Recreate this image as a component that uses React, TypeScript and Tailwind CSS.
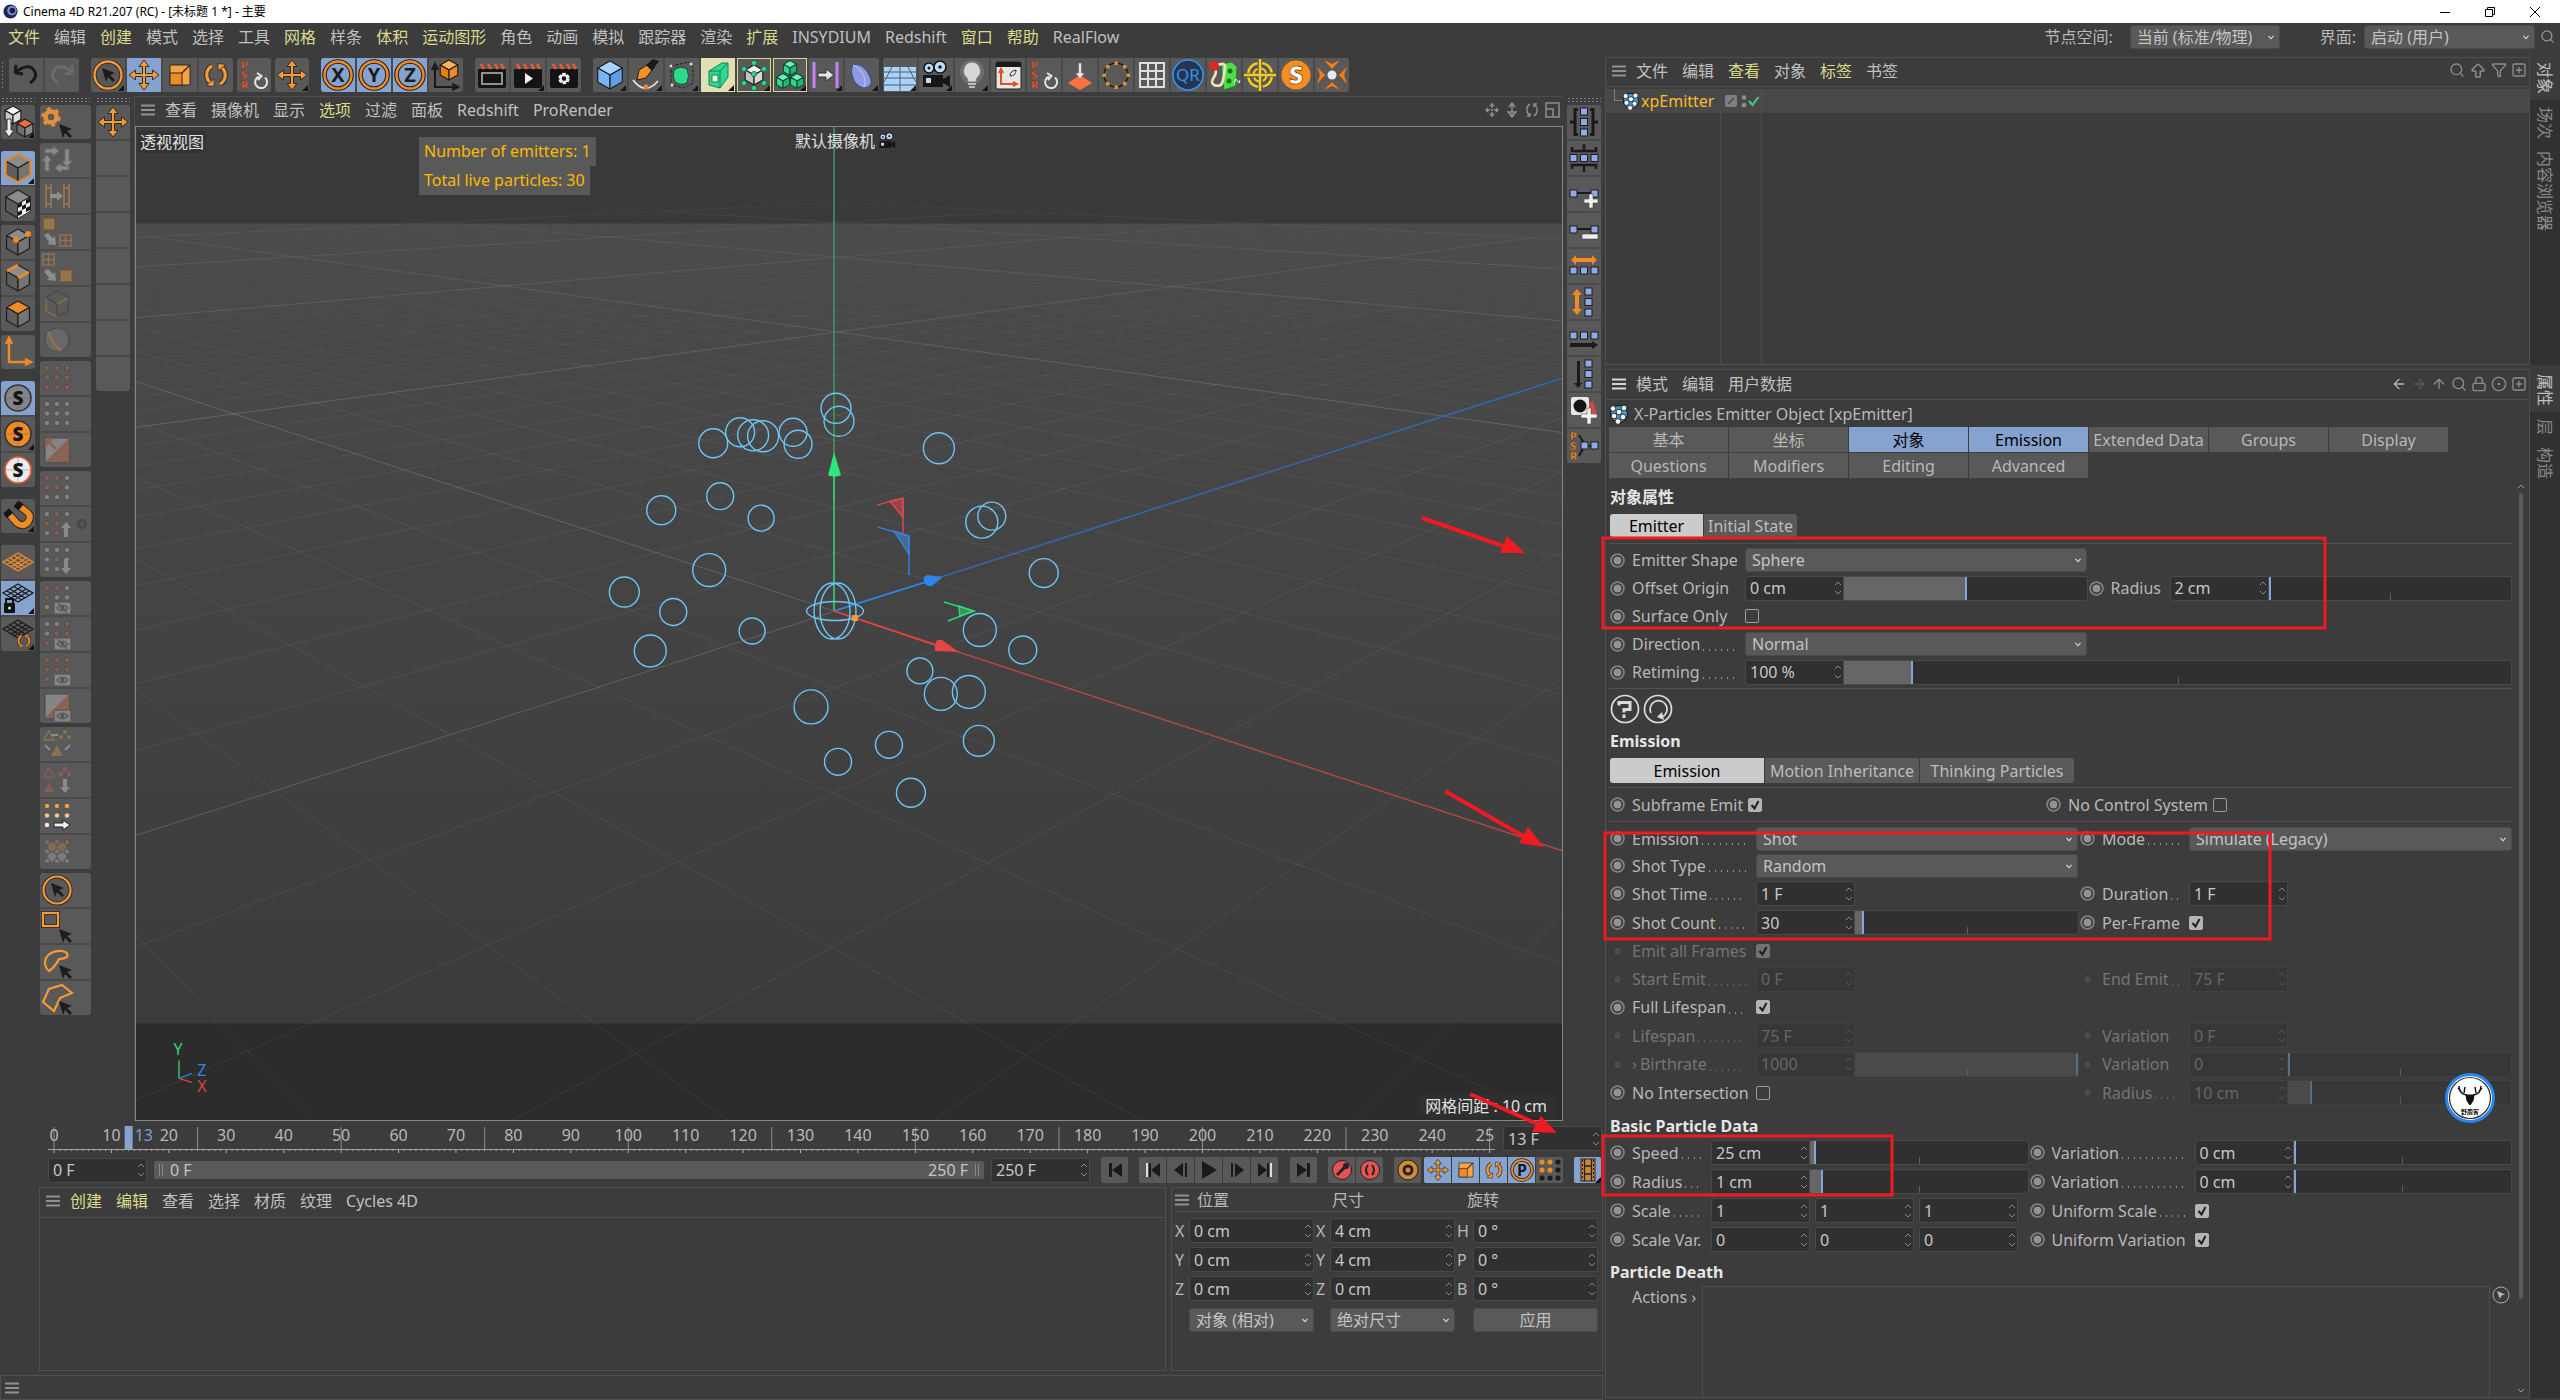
import React, { useId, type ReactNode } from "react";
import {
  ArrowBigUp, ArrowLeft, ArrowRight, ArrowUp, CircleDot, Filter, Lock, Search, SquarePlus,
} from "lucide-react";

const OR = "#f08a24";
const BL = "#8fa9ec";
const GR = "#2fd98b";

/* ---------- icon drawing helpers ---------- */

function Cube({ x = 17, y = 17, s = 11, top = "#8c8c8c", left = "#5e5e5e", right = "#757575", line = "#1e1e1e" }: {
  x?: number; y?: number; s?: number; top?: string; left?: string; right?: string; line?: string;
}) {
  const w = s * 0.88;
  const h = s * 0.5;
  return (
    <g stroke={line} strokeWidth="1.2" strokeLinejoin="round">
      <path fill={top} d={`M${x} ${y - s}L${x + w} ${y - h}L${x} ${y}L${x - w} ${y - h}Z`} />
      <path fill={left} d={`M${x - w} ${y - h}L${x} ${y}V${y + s}L${x - w} ${y + h}Z`} />
      <path fill={right} d={`M${x + w} ${y - h}L${x} ${y}V${y + s}L${x + w} ${y + h}Z`} />
    </g>
  );
}

const corner = <path d="M33 27v6h-6z" fill="#151515" />;
const cursor = (x: number, y: number, c = "#1c1c1c") => (
  <path transform={`translate(${x} ${y})`} fill={c} d="M0 0l13 5-5 2 5 5-2 2-5-5-2 5z" />
);
const dots = (colors: string[], skip: number[] = []) =>
  colors.map((c, i) =>
    skip.includes(i) ? null : (
      <circle key={i} cx={7 + (i % 3) * 10} cy={7 + Math.floor(i / 3) * 9.5} r="2.7" fill={c} stroke="#4a4a4a" strokeWidth=".8" />
    ));
const R = "#865d54";
const W = "#828282";
const eye = (slash: boolean) => (
  <g stroke="#565656" strokeWidth="1.2">
    <rect x="14" y="21" width="17" height="12" fill="#868686" />
    <path d="M17 27q5.500-6 11 0q-5.500 6-11 0z" fill="none" />
    <circle cx="22.500" cy="27" r="1.600" fill="#565656" />
    {slash && <path d="M18 22.500l9 9" />}
  </g>
);
const sq = (x: number, y: number) => <rect key={`${x}-${y}`} x={x} y={y} width="7" height="7" fill={BL} stroke="#1c1c1c" />;
const moveCross = (c: string) => (
  <path fill={c} stroke="#2b2b2b" strokeWidth="1" strokeLinejoin="round" d="M17 2l5 6.500h-3.500v7h7V12l6.500 5-6.500 5v-3.500h-7v7H22L17 32l-5-6.500h3.500v-7h-7V22L2 17l6.500-5v3.500h7v-7H12z" />
);
const axis = (l: string) => (
  <>
    <circle cx="17" cy="17" r="13.500" fill="none" stroke="#222" strokeWidth="4.600" />
    <circle cx="17" cy="17" r="13.500" fill="none" stroke={OR} strokeWidth="2.400" />
    <text x="17" y="24" textAnchor="middle" fontSize="20" fontWeight="700" fill="#1c1c1c">{l}</text>
  </>
);
const psr = (x: number, c: string) => (
  <g fontSize="11" fontWeight="800" fill={c} stroke="#2a2a2a" strokeWidth=".3">
    <text x={x} y="11">P</text><text x={x} y="21">S</text><text x={x} y="31">R</text>
  </g>
);
const rotArrows = (c: string) => (
  <>
    <g fill="none" stroke="#2b2b2b" strokeWidth="5.200">
      <path d="M13 8a10 10 0 0 0-1 17" /><path d="M21 26a10 10 0 0 0 1-17" />
    </g>
    <g fill="none" stroke={c} strokeWidth="3.200">
      <path d="M13 8a10 10 0 0 0-1 17" /><path d="M21 26a10 10 0 0 0 1-17" />
    </g>
    <path d="M15 21v7.500l-8-1zM19 13V5.500l8 1z" fill={c} stroke="#2b2b2b" strokeWidth=".8" />
  </>
);
const scaleBox = (
  <g stroke="#2b2b2b" strokeWidth="1">
    <path fill="#f8a244" d="M7 7h20v20H7z" /><path fill={OR} d="M7 15h12v12H7z" /><path d="M19 15l8-8" strokeWidth="1.500" />
  </g>
);
const clap = (
  <>
    <path fill="#141414" d="M3 11h28v17a2 2 0 0 1-2 2H5a2 2 0 0 1-2-2z" />
    <path stroke="#ee5a32" strokeWidth="2.600" d="M6 6l3 5M13 6l3 5M20 6l3 5M26 6l3 5" />
  </>
);
const sBall = (bg: string, ring: string) => (
  <>
    <circle cx="17" cy="17" r="13" fill={bg} stroke={ring} strokeWidth="1.600" />
    <path d="M4 17h26M17 4v26" stroke="#55555577" strokeWidth=".8" />
    <text x="17" y="24" textAnchor="middle" fontSize="19" fontWeight="900" fill="#161616">S</text>
  </>
);
const plane = (c: string) => (
  <g fill="none" stroke={c} strokeWidth="1.300">
    <path d="M17 3L32 12 17 21 2 12zM13 5.500l15 9M9 8l15 9M6 10l15 9M21 5.500L6 14.500M25 8L10 17M28 10L13 19" />
  </g>
);
const camera = (
  <>
    <circle cx="10" cy="10" r="5" fill="#bcdcfa" stroke="#161616" strokeWidth="1.600" /><circle cx="21" cy="9" r="6" fill="#bcdcfa" stroke="#161616" strokeWidth="1.600" />
    <circle cx="10" cy="10" r="1.500" fill="#161616" /><circle cx="21" cy="9" r="1.800" fill="#161616" />
    <path fill="#161616" d="M4 17h20v4l7-4v12l-7-4v4H4z" /><rect x="7" y="20" width="5" height="5" fill="#bcdcfa" />
  </>
);

const I: Record<string, ReactNode> = {
  undo: <path d="M6 15q10-9 17-5q8 8-2 15M6 15l1-8M6 15l8 1" fill="none" stroke="#1a1a1a" strokeWidth="3" />,
  redo: <path d="M28 15q-10-9-17-5q-8 8 2 15M28 15l-1-8M28 15l-8 1" fill="none" stroke="#6a6a6a" strokeWidth="3" />,
  live: <><circle cx="17" cy="17" r="13.500" fill="none" stroke="#222" strokeWidth="4" /><circle cx="17" cy="17" r="13.500" fill="none" stroke="#f79a34" strokeWidth="2.400" />{cursor(11, 10)}{corner}</>,
  move: moveCross("#f79a34"),
  moveC: <>{moveCross("#f79a34")}{corner}</>,
  scale: scaleBox,
  rotate: rotArrows("#f79a34"),
  psr: <>{psr(4, "#ee5a32")}<path d="M28 19.500a6 6 0 1 1-6-1M20 15l4.500 3-3.500 4" fill="none" stroke="#e4e4e4" strokeWidth="2" /></>,
  x: axis("X"), y: axis("Y"), z: axis("Z"),
  coord: <><path d="M6 8v21h21M3 12l3-6 3 6M23 26l6 3-6 3" fill="none" stroke="#1a1a1a" strokeWidth="2.200" /><Cube x={20} y={12} s={10} top="#fbb25c" left="#e57f16" right={OR} /></>,
  clap1: <>{clap}<rect x="7" y="15" width="20" height="11" fill="none" stroke="#b9b9b9" strokeWidth="1.500" /></>,
  clap2: <>{clap}<path d="M14 15l8 5.500-8 5.500z" fill="#eee" />{corner}</>,
  clap3: <>{clap}<circle cx="17" cy="20.500" r="4" fill="none" stroke="#eee" strokeWidth="3.500" strokeDasharray="3 1.200" /><circle cx="17" cy="20.500" r="3.500" fill="none" stroke="#eee" strokeWidth="2" /></>,
  cube: <><Cube s={14} top="#a9d4ff" left="#77b5f3" right="#5b9ee4" />{corner}</>,
  pen: <><path d="M4 22q12 16 25 1" fill="none" stroke="#e6e6e6" strokeWidth="1.800" /><path d="M8 22l2-10 8-5 5 5-6 8z" fill="#f3902c" stroke="#1c1c1c" /><path d="M17 7l7-6 6 2-7 10z" fill="#191919" /><circle cx="17" cy="29" r="2.500" fill={OR} />{corner}</>,
  subd: <><path d="M6 8l18-4 4 6v15l-9 5-13-3z" fill="none" stroke="#1f1f1f" strokeDasharray="3 1.500" /><path d="M9 12q6-5 13-1q3 6 0 14q-7 3-12-1q-3-6-1-12z" fill={GR} stroke="#114b33" /><circle cx="6" cy="8" r="1.500" fill="#ddd" /><circle cx="26" cy="6" r="1.500" fill="#ddd" /><circle cx="7" cy="27" r="1.500" fill="#ddd" />{corner}</>,
  extrude: <><path d="M8 13l13-8h6v14l-8 11-11-3z" fill={GR} stroke="#148052" /><path d="M8 13h11v17M19 13l8-8" fill="none" stroke="#148052" /><rect x="11" y="17" width="6" height="7" fill="#f2f2d8" stroke="#148052" />{corner}</>,
  array: <><Cube s={10} top="#f0f0f0" left="#c4c4c4" right="#d8d8d8" />{[[17, 5], [17, 30], [7, 11], [27, 11], [7, 25], [27, 25], [17, 16]].map(([a, c]) => <circle key={`${a}${c}`} cx={a} cy={c} r="2.600" fill={GR} stroke="#11623f" strokeWidth=".8" />)}{corner}</>,
  cubes: <>{[[17, 10], [10, 23], [24, 23]].map(([a, c]) => <Cube key={`${a}`} x={a} y={c} s={7.5} top="#6cf0b5" left={GR} right="#22b874" line="#134f36" />)}{corner}</>,
  field: <><path d="M5 4v26M28 4v26" stroke="#c382f5" strokeWidth="3" /><path d="M9 15h8v-4l8 6-8 6v-4H9z" fill="#e4e4e4" stroke="#333" />{corner}</>,
  bend: <><path d="M8 7q7-2 13 5q6 8 5 14q-4 5-8 4q-8-3-10-10q-3-8 0-13z" fill="#8f9be0" stroke="#3e4684" /><path d="M8 7q8 4 11 11q2 6 0 11" fill="none" stroke="#c0c8fa" />{corner}</>,
  floor: <><rect x="1" y="9" width="32" height="24" fill="#a9d2fc" /><path d="M1 14h32M1 20h32M1 27h32M17 9v24M9 9L1 24M25 9l8 15" stroke="#4e5d6c" fill="none" />{corner}</>,
  camera: <>{camera}{corner}</>,
  bulb: <><circle cx="17" cy="14" r="12" fill="#ffffff22" /><path d="M17 4a9 9 0 0 1 5 16l-1 4h-8l-1-4a9 9 0 0 1 5-16z" fill="#d8d8d8" stroke="#777" /><path d="M13 26h8M14 29h6" stroke="#bbb" strokeWidth="2" />{corner}</>,
  uv: <><rect x="5" y="4" width="25" height="27" rx="2" fill="#e8e6e4" stroke="#222" /><path d="M5 4h25v5H5z" fill="#1a1a1a" /><path d="M10 13v13h14M8 15l2-4 2 4M22 24l4 2-4 2" fill="none" stroke="#dd5122" strokeWidth="2" /><path d="M19 18q0-5 6-6q0 6-6 6z" fill="none" stroke="#333" /></>,
  drop: <><path d="M17 17l12 8-12 7-12-7z" fill="#fd7141" /><path d="M15.500 5h3v10h3L17 21l-4.500-6h3z" fill="#e6e6e6" stroke="#555" strokeWidth=".5" /></>,
  ring: <><circle cx="17" cy="17" r="12" fill="none" stroke="#1a1a1a" strokeWidth="1.500" />{[0, 1, 2, 3, 4, 5, 6, 7].map((k) => <rect key={k} x={15.5 + 12 * Math.cos(k * 0.785)} y={15.5 + 12 * Math.sin(k * 0.785)} width="3.500" height="3.500" fill="#e09030" />)}</>,
  grid: <path d="M5 5h24v24H5zM5 13h24M5 21h24M13 5v24M21 5v24" fill="none" stroke="#dedede" strokeWidth="2" />,
  qr: <><circle cx="17" cy="17" r="15" fill="#283350" stroke="#2f93ee" strokeWidth="1.600" /><text x="17" y="23" textAnchor="middle" fontSize="17" fill="#2f93ee">QR</text></>,
  snake: <><path d="M14 6l11-2 5 5-1 19-12 4z" fill="#4fdc48" stroke="#1d7d20" /><circle cx="23" cy="13" r="2.500" fill="#177a1a" /><circle cx="22" cy="23" r="2.500" fill="#177a1a" /><path d="M9 8q10-5 9 2t-2 12q-1 8-9 5q-4-2 0-8q3-4 1-8" fill="none" stroke="#f0dfc0" strokeWidth="2.600" /><circle cx="7" cy="8" r="5" fill="#d72a2a" /><path d="M27 25l2-4 3 4 1-3" fill="none" stroke="#eee" /></>,
  target: <g fill="none" stroke="#f8cb1c"><circle cx="17" cy="17" r="12" strokeWidth="2.400" strokeDasharray="14 4.800" strokeDashoffset="-2" /><circle cx="17" cy="17" r="6.500" strokeWidth="2" strokeDasharray="7 3.200" /><path d="M17 1v32M1 17h32" strokeWidth="2.400" /></g>,
  sOrange: <><circle cx="17" cy="17" r="14.500" fill="#f98c1d" /><text x="17" y="26" textAnchor="middle" fontSize="25" fontWeight="900" fill="#fff" stroke="#5b3410" strokeWidth=".6">S</text></>,
  burst: <><path fill="#fb7a12" d="M9 2l8 4 8-4-8 9zM9 32l8-8 8 8-8-4zM2 9l8 8-8 9 3-9zM32 9l-8 8 8 9-3-9z" /><circle cx="17" cy="17" r="4.500" fill="#e8e8ee" /></>,

  editable: <><Cube x={12} y={10} s={9} top="#f4f4f4" left="#c9c9c9" right="#dedede" /><Cube x={24} y={23} s={9} top="#f26a34" left="#707070" right="#8a8a8a" /><path d="M6 14h4v11h3l-5 7-5-7h3z" fill="#eee" stroke="#333" />{corner}</>,
  model: <><Cube s={14} top="#8b8b8b" left="#5d5d5d" right="#747474" /><path d="M17 3L29.300 10v14L17 31 4.700 24V10z" fill="none" stroke={OR} strokeWidth="2" />{corner}</>,
  texture: <><Cube s={14} /><path d="M17 17l12-6v13l-12 7z" fill="#eee" /><path d="M17 17l4-2v4l-4 2zM25 13l4-2v4l-4 2zM21 19l4-2v4l-4 2zM17 25l4-2v4l-4 2zM25 21l4-2v4l-4 2z" fill="#161616" /></>,
  point: <><Cube s={13} /><circle cx="15" cy="15" r="3" fill={OR} /><circle cx="27" cy="9" r="3" fill={OR} /></>,
  edge: <><Cube s={13} /><path d="M6 10l11-6M17 17l11-6" stroke={OR} strokeWidth="2.600" /></>,
  poly: <Cube s={13} top={OR} />,
  axisL: <path d="M8 6v21h19M5 9l3-6 3 6M24 24l6 3-6 3" fill="none" stroke={OR} strokeWidth="2.400" />,
  s1: sBall("#858585", "#333"), s2: <>{sBall(OR, "#333")}{corner}</>, s3: sBall("#ececec", "#ee5a32"),
  magnet: <><path d="M7 14l9 10q6 5 11-1q4-6-1-10l-9-7" fill="none" stroke="#2a2a2a" strokeWidth="8" /><path d="M7 14l9 10q6 5 11-1q4-6-1-10l-9-7" fill="none" stroke={OR} strokeWidth="6" /><path d="M5 12l4 4.500M15 4.500l5 4" stroke="#161616" strokeWidth="7.500" />{corner}</>,
  wp: <g transform="translate(0 5)">{plane(OR)}</g>,
  wplock: <>{plane("#1b1b1b")}<rect x="3" y="22" width="11" height="10" rx="1" fill="#111" /><path d="M5 22v-4h7v4" fill="none" stroke="#111" strokeWidth="2" /><circle cx="8.500" cy="27" r="1.500" fill="#ddd" />{corner}</>,
  wprot: <>{plane("#1b1b1b")}<g transform="translate(13 14) scale(.58)">{rotArrows(OR)}</g>{corner}</>,

  tweak: <><circle cx="11" cy="12" r="5.500" fill="none" stroke="#e2913a" strokeWidth="4.500" /><circle cx="11" cy="12" r="8.500" fill="none" stroke="#e2913a" strokeWidth="2.500" strokeDasharray="4 4.900" />{cursor(19, 19)}</>,
  d1: <g fill="#8a8a8a" stroke="#6d6d6d"><path d="M5 6h8V3l6 5-6 5v-3H5zM25 6h4v12h3l-5 6-5-6h3zM29 27h-8v3l-6-5 6-5v3h8zM5 28V18H2l5-6 5 6H9v10z" /></g>,
  d2: <g fill="none" stroke="#907252" strokeWidth="2"><path d="M6 5v24M11 5v24M24 5v24M29 5v24M6 9h5M6 25h5M24 9h5M24 25h5" /><path d="M10 15h7v-3l6 5-6 5v-3h-7z" fill="#8c8c8c" stroke="none" /></g>,
  d3: <><rect x="3" y="3" width="12" height="12" fill="#96744c" stroke="#6b5434" /><path d="M4 20l4-2 5 5 2-2 1 9-9-1 2-2z" fill="#8c8c8c" /><path d="M20 20h11v11H20zM25.500 20v11M20 25.500h11" fill="none" stroke="#907252" strokeWidth="1.500" /></>,
  d4: <><path d="M3 3h11v11H3zM8.500 3v11M3 8.500h11" fill="none" stroke="#907252" strokeWidth="1.500" /><path d="M4 20l4-2 5 5 2-2 1 9-9-1 2-2z" fill="#8c8c8c" /><rect x="20" y="19" width="12" height="12" fill="#96744c" stroke="#6b5434" /></>,
  d5: <g opacity=".6"><Cube s={13} top="#5c5c5c" left="#5c5c5c" right="#5c5c5c" line="#3d3d3d" /><path d="M17 17l11-6M6 11v13l11 6" stroke="#b07a3c" strokeWidth="1.600" fill="none" /></g>,
  d6: <><circle cx="17" cy="17" r="12" fill="#686868" stroke="#4a4a4a" /><path d="M8 9q6 14 13 19" stroke="#907252" strokeWidth="3" fill="none" /></>,
  e1: dots([R, R, R, R, R, R, R, R, R]),
  e2: dots([W, W, W, W, W, W, W, W, W]),
  e3: <><rect x="5" y="5" width="24" height="24" fill="#858585" stroke="#484848" /><path d="M5 29L29 5v24zM5 5l10 0-10 10z" fill="#8c6257" /><path d="M8 8l8 8M18 18l9 9" stroke="#8c6257" strokeWidth="2.500" /></>,
  f1: <>{dots([R, R, W, R, R, W, W, W, W])}<circle cx="12" cy="11.500" r="4.500" fill="none" stroke="#6b564e" strokeWidth="1.500" /></>,
  f2: <>{dots([W, R, W, R, R, R, W, R, W], [8])}<path d="M26 15l5 6h-3v9h-4v-9h-3z" fill="#8a8a8a" /></>,
  f3: <>{dots([W, W, W, W, R, W, W, W, W], [8])}<path d="M26 31l5-6h-3v-9h-4v9h-3z" fill="#8a8a8a" /></>,
  g1: <>{dots([R, R, W, R, W, W, W, W, W], [7, 8])}{eye(true)}</>,
  g2: <>{dots([W, W, R, W, R, R, R, W, W], [7, 8])}{eye(true)}</>,
  g3: <>{dots([R, R, R, R, R, R, R, W, W], [7, 8])}{eye(false)}</>,
  g4: <><rect x="5" y="5" width="24" height="24" fill="#858585" stroke="#484848" /><path d="M5 29L29 5v24z" fill="#8c6257" />{eye(false)}</>,
  h1: <><path d="M9 4l5 9H4z" fill="none" stroke="#8a7150" strokeWidth="1.500" /><path d="M11 8h7M5 18l5 5M30 18l-5 5" stroke="#8c8c8c" strokeWidth="2" /><path d="M17 18l6 11H11z" fill="#8a7150" /><circle cx="25" cy="5" r="2" fill="#8a7150" /><circle cx="21" cy="10" r="2" fill="#8a7150" /><circle cx="29" cy="10" r="2" fill="#8a7150" /></>,
  h2: <><path d="M9 5l5 9H4z" fill="none" stroke={R} strokeWidth="1.500" /><path d="M9 20l5 9H4z" fill={R} /><circle cx="25" cy="6" r="2.200" fill={R} /><circle cx="21" cy="11" r="2.200" fill={R} /><circle cx="29" cy="11" r="2.200" fill={R} /><path d="M23 16h4v8h3l-5 6-5-6h3z" fill="#8a8a8a" /></>,
  h3: <>{dots(["#f5a045", "#f5a045", "#f5a045", "#f3c791", "#f3c791", "#f3c791", "#f4e6dc", W, W], [7, 8])}<path d="M14 24h9v-3l7 5-7 5v-3h-9z" fill="#f0f0f0" stroke="#222" /></>,
  h4: <g opacity=".75"><circle cx="12" cy="12" r="4.500" fill="#8a7150" /><circle cx="22" cy="12" r="4.500" fill="#8a7150" /><circle cx="12" cy="22" r="4.500" fill="#858585" /><circle cx="22" cy="22" r="4.500" fill="#858585" />{dots(["#8a7150", "#8a7150", "#8a7150", "#8a8074", "#8a8074", "#8a8074", W, W, W])}</g>,
  i1: <><circle cx="17" cy="17" r="13.500" fill="none" stroke="#2a2a2a" strokeWidth="4" /><circle cx="17" cy="17" r="13.500" fill="none" stroke="#f79a34" strokeWidth="2.200" />{cursor(11, 10)}</>,
  i2: <><rect x="3" y="4" width="15" height="13" fill="none" stroke="#2a2a2a" strokeWidth="4" /><rect x="3" y="4" width="15" height="13" fill="none" stroke="#f79a34" strokeWidth="2.200" />{cursor(19, 20)}</>,
  i3: <><path d="M9 26q-6-5-3-13q5-8 16-7q7 1 5 6q-3 2-8 2q-4 8-10 12z" fill="none" stroke="#f79a34" strokeWidth="2.200" />{cursor(19, 20)}</>,
  i4: <><path d="M3 21l6-13 13-4 10 8-12 5-6 13z" fill="none" stroke="#f79a34" strokeWidth="2.200" />{cursor(19, 20)}</>,

  v1: <><path d="M11 4.500H8v25h3M23 4.500h3v25h-3M3 17h6M25 17h6" stroke="#1b1b1b" strokeWidth="3" fill="none" />{[3, 13.5, 24].map((y) => sq(13.5, y))}</>,
  v2: <><path d="M17 3v7M5 6v4h24V6M17 31v-7M5 28v-4h24v4" stroke="#1b1b1b" strokeWidth="2.600" fill="none" />{[3, 13.5, 24].map((x) => sq(x, 13.5))}</>,
  v3: <><path d="M8 16h18" stroke="#1b1b1b" strokeWidth="2" />{sq(3, 13)}{sq(24, 13)}<path d="M20 17h4v5h5v4h-5v5h-4v-5h-5v-4h5z" transform="translate(2 0)" fill="#eee" stroke="#444" strokeWidth=".6" /></>,
  v4: <><path d="M8 16h18" stroke="#1b1b1b" strokeWidth="2" />{sq(3, 13)}{sq(24, 13)}<rect x="15" y="21" width="16" height="5" fill="#eee" stroke="#444" strokeWidth=".6" /></>,
  v5: <><path d="M4 11l5-5v3h16V6l5 5-5 5v-3H9v3z" fill={OR} />{[3, 13.5, 24].map((x) => sq(x, 18))}</>,
  v6: <><path d="M10 4l5 6h-3v14h3l-5 6-5-6h3V10H5z" fill={OR} />{[3, 13.5, 24].map((y) => sq(18, y))}</>,
  v7: <>{[3, 13.500, 24].map((x) => sq(x, 11))}<path d="M3 22h22v-2l6 4-6 4v-2H3z" fill="#1b1b1b" /></>,
  v8: <><path d="M10 4h3v22h2l-4 5-4-5h3z" fill="#1b1b1b" />{[3, 13.500, 24].map((y) => sq(18, y))}</>,
  v9: <><path d="M14 14l12-6 4 14-9 8z" fill="#d9473f" /><rect x="4" y="4" width="18" height="18" rx="2" fill="#e8e8e8" /><circle cx="13" cy="13" r="6.500" fill="#141414" /><path d="M20 15h4v6h6v4h-6v6h-4v-6h-6v-4h6z" fill="#f2f2f2" stroke="#555" strokeWidth=".6" /></>,
  v10: <>{psr(3, OR)}<path d="M12 6l6 10-6 11M22 17h4" stroke="#1b1b1b" strokeWidth="2" fill="none" />{sq(14, 13)}{sq(24, 13)}</>,
};

function Icon({ n, cls = "size-[34px]" }: { n: string; cls?: string }) {
  return <svg viewBox="0 0 34 34" className={`${cls} shrink-0`} aria-hidden="true">{I[n]}</svg>;
}

type Btn = { n: string; on?: boolean; pale?: boolean; ring?: boolean; gear?: boolean };
const b = (...names: string[]): Btn[] => names.map((n) => ({ n }));

function HGroup({ items, cls = "" }: { items: Btn[]; cls?: string }) {
  return (
    <div className={`flex gap-[2px] overflow-hidden rounded-[3px] bg-[#4a4a4a] ${cls}`}>
      {items.map((it, i) => (
        <button key={i} aria-label={it.n} className={`size-[34px] ${it.on ? "bg-[#86a3d0]" : it.pale ? "bg-[#e0e0b4]" : "bg-[#595959]"} ${it.ring ? "outline-1 -outline-offset-1 outline-[#d6d68c]" : ""}`}>
          <Icon n={it.n} />
        </button>
      ))}
    </div>
  );
}

function VGroup({ items, cls = "", wide = false }: { items: Btn[]; cls?: string; wide?: boolean }) {
  return (
    <div className={`flex flex-col gap-[2px] overflow-hidden rounded-[3px] bg-[#4a4a4a] ${wide ? "w-[51px]" : "w-[34px]"} ${cls}`}>
      {items.map((it, i) => (
        <button key={i} aria-label={it.n || `空 ${i}`} className={`flex h-[34px] items-center ${it.on ? "bg-[#86a3d0]" : "bg-[#595959]"}`}>
          {it.n && <Icon n={it.n} />}
          {it.gear && <svg viewBox="0 0 12 12" className="ml-[2px] size-[12px]"><circle cx="6" cy="6" r="3.500" fill="none" stroke="#484848" strokeWidth="3" /></svg>}
        </button>
      ))}
    </div>
  );
}

const GripH = ({ cls = "" }: { cls?: string }) => (
  <div className={`h-[5px] bg-[radial-gradient(circle,#7a7a7a_1px,transparent_1px)] bg-[size:4px_3px] ${cls}`} />
);
const Burger = ({ cls = "" }: { cls?: string }) => (
  <svg viewBox="0 0 14 12" className={`h-[12px] w-[14px] shrink-0 ${cls}`} aria-hidden="true">
    <path d="M0 1.500h14M0 6h14M0 10.500h14" stroke="currentColor" strokeWidth="2" />
  </svg>
);

function Menu({ items, cls = "" }: { items: string[]; cls?: string }) {
  return (
    <nav className={`flex items-center gap-[14px] whitespace-nowrap ${cls}`}>
      {items.map((t) => {
        const hi = t.startsWith("*");
        const label = hi ? t.slice(1) : t;
        return <button key={label} className={hi ? "text-[#dada8c]" : "text-[#c0c0c0]"}>{label}</button>;
      })}
    </nav>
  );
}

/* ---------- form parts ---------- */

function Drop({ label, options, cls = "" }: { label: string; options: string[]; cls?: string }) {
  return (
    <span className={`relative block h-[24px] ${cls}`}>
      <select aria-label={label} className="block h-full w-full appearance-none rounded-[3px] border border-[#4a4a4a] bg-[#595959] px-[6px] leading-[20px] text-[#c4c4c4]">
        {options.map((o) => <option key={o}>{o}</option>)}
      </select>
      <svg viewBox="0 0 8 6" className="pointer-events-none absolute top-[10px] right-[5px] h-[5px] w-[8px]"><path d="M1 1l3 3.500L7 1" fill="none" stroke="#e0e0e0" strokeWidth="1.300" /></svg>
    </span>
  );
}

function Field({ label, value, off = false, cls = "w-[99px]" }: { label: string; value: string; off?: boolean; cls?: string }) {
  return (
    <span className={`flex h-[25px] shrink-0 items-center rounded-l-[3px] border ${off ? "border-[#424242] bg-[#373737]" : "border-[#494949] bg-[#303030]"} ${cls}`}>
      <input aria-label={label} defaultValue={value} disabled={off} className={`h-full w-0 flex-1 bg-transparent pl-[4px] outline-none ${off ? "text-[#666]" : "text-[#c8c8c8]"}`} />
      <svg viewBox="0 0 8 14" className={`mr-[1px] h-[14px] w-[8px] ${off ? "text-[#555]" : "text-[#888]"}`}><path d="M1 4l3-3 3 3M1 10l3 3 3-3" fill="none" stroke="currentColor" /></svg>
    </span>
  );
}

function Bar({ label, at, off = false, tick = true }: { label: string; at: number; off?: boolean; tick?: boolean }) {
  return (
    <span className={`relative block h-[25px] flex-1 overflow-hidden rounded-r-[3px] border border-l-0 ${off ? "border-[#424242] bg-[#373737]" : "border-[#494949] bg-[#303030]"}`}>
      <span className={`absolute inset-y-0 left-0 ${off ? "bg-[#4a4a4a]" : "bg-[#666]"}`} style={{ width: `${at}%` }} />
      {tick && <span className="absolute bottom-0 left-1/2 h-[7px] w-px bg-[#56606c]" />}
      <span className={`absolute inset-y-0 w-[2px] ${off ? "bg-[#5a6c8c]" : "bg-[#84a3d6]"}`} style={{ left: at >= 100 ? "calc(100% - 2px)" : `${at}%` }} />
      <input type="range" aria-label={label} defaultValue={at} disabled={off} className="absolute inset-0 w-full opacity-0" />
    </span>
  );
}

function Num({ label, value, at, off = false, tick = true }: { label: string; value: string; at?: number; off?: boolean; tick?: boolean }) {
  return (
    <div className="flex min-w-0">
      <Field label={label} value={value} off={off} />
      {at !== undefined && <Bar label={`${label} 滑块`} at={at} off={off} tick={tick} />}
    </div>
  );
}

function Key({ off = false }: { off?: boolean }) {
  return (
    <svg viewBox="0 0 16 16" className="ml-px size-[15px] shrink-0" aria-hidden="true">
      {off ? <circle cx="8" cy="8" r="4.500" fill="#4a4a4a" stroke="#333" /> : (
        <><circle cx="8" cy="8" r="6.800" fill="#303030" stroke="#808080" strokeWidth="2" /><circle cx="8" cy="8" r="4.200" fill="#929292" /></>
      )}
    </svg>
  );
}

function Lab({ t, id, off = false, lead = true, arrow = false }: { t: string; id?: string; off?: boolean; lead?: boolean; arrow?: boolean }) {
  return (
    <div className={`flex min-w-0 items-center whitespace-nowrap ${off ? "text-[#757575]" : "text-[#b8b8b8]"}`}>
      <Key off={off} />
      <label htmlFor={id} className="ml-[7px]">{arrow && <span className="mr-[3px]">›</span>}{t}</label>
      {lead && <span className="mt-[11px] mr-[10px] ml-[3px] h-[2px] flex-1 bg-[repeating-linear-gradient(90deg,currentColor_0_1px,transparent_1px_6px)] opacity-70" />}
    </div>
  );
}

function Check({ id, on = false, off = false }: { id: string; on?: boolean; off?: boolean }) {
  return (
    <span className="relative block size-[14px] shrink-0">
      <input id={id} type="checkbox" defaultChecked={on} disabled={off} className={`block size-[14px] appearance-none rounded-[2px] border ${on ? (off ? "border-[#727272] bg-[#727272]" : "border-[#b4b4b4] bg-[#b4b4b4]") : "border-[#9a9a9a]"}`} />
      {on && <svg viewBox="0 0 14 14" className="pointer-events-none absolute inset-0 size-[14px]"><path d="M3.500 7l3 3.500L10.500 3" fill="none" stroke="#1e1e1e" strokeWidth="2" /></svg>}
    </span>
  );
}

function LabCheck({ t, on = false, off = false }: { t: string; on?: boolean; off?: boolean }) {
  const id = useId();
  return <div className="flex items-center gap-[5px]"><Lab t={t} id={id} off={off} lead={false} /><Check id={id} on={on} off={off} /></div>;
}

const Hr = ({ cls = "" }: { cls?: string }) => <div className={`h-px bg-[#505050] ${cls}`} />;
const E = () => <span />;

function SubTabs({ items, cls }: { items: string[]; cls: string }) {
  return (
    <div className={`flex gap-px ${cls}`} role="tablist">
      {items.map((t, i) => (
        <button key={t} role="tab" aria-selected={i === 0} className={`flex-1 ${i === 0 ? "rounded-l-[3px] bg-[#cbcbcb] text-black" : "bg-[#5a5a5a] text-[#bdbdbd]"} ${i === items.length - 1 ? "rounded-r-[3px]" : ""}`}>{t}</button>
      ))}
    </div>
  );
}

const Logo = ({ cls = "size-[20px]" }: { cls?: string }) => (
  <svg viewBox="0 0 20 20" className={`${cls} shrink-0`} aria-hidden="true">
    <circle cx="10" cy="10" r="8.500" fill="#3d9fd8" stroke="#111" />
    {[[4, 4.5], [15, 4], [10, 8], [5, 12], [14, 13], [9, 17.5]].map(([a, c]) => <circle key={`${a}-${c}`} cx={a} cy={c} r="2.800" fill="#fff" stroke="#111" strokeWidth=".8" />)}
  </svg>
);

/* ---------- viewport ---------- */

const PARTICLES: [number, number, number][] = [
  [836, 408, 15], [839, 421, 15], [713, 443, 14.5], [740, 432, 14.5], [753, 435, 15.5], [763, 436, 15.5],
  [793, 432, 14], [798, 444, 14], [939, 448, 15.5], [661, 510, 14.5], [720, 496, 13.5], [761, 518, 13],
  [982, 522, 16], [992, 516, 14], [1044, 573, 14.5], [709, 570, 16.5], [624, 592, 15], [673, 612, 13.5],
  [650, 651, 16], [752, 631, 13], [980, 630, 16.5], [1023, 650, 14], [920, 671, 13], [941, 694, 16.5],
  [969, 692, 16.5], [811, 707, 17], [889, 745, 13.5], [979, 741, 15.5], [838, 762, 13.5], [911, 793, 14.5],
];

function gridLines() {
  const hor = 127;
  const [lx, rx] = [-639, 2346];
  const out: { k: string; p: [number, number, number, number]; major: boolean; o: number }[] = [];
  for (let k = -7; k <= 40; k++) {
    const major = k % 10 === 0;
    const o = major ? 1 : Math.max(0.25, 1 - Math.max(0, k) * 0.03);
    const cr = 3.12 + 0.425 * k;
    const cl = 3.043 + 0.417 * k;
    if (cr > 0.3) {
      const h = 2985 / (cr + 19.7);
      out.push({ k: `r${k}`, p: [rx - cr * h, hor + h, rx - cr * 1100, hor + 1100], major, o });
    }
    if (cl > 0.3) {
      const h = 2985 / (cl + 20.1);
      out.push({ k: `l${k}`, p: [lx + cl * h, hor + h, lx + cl * 1100, hor + 1100], major, o });
    }
  }
  return out;
}

function Scene() {
  return (
    <svg viewBox="135 126 1428 995" preserveAspectRatio="xMidYMid slice" className="absolute inset-0 h-full w-full" role="img" aria-label="透视视图">
      <defs>
        <linearGradient id="floor" x1="0" y1="0" x2="0" y2="1"><stop offset="0" stopColor="#4b4b4b" /><stop offset="1" stopColor="#3b3b3b" /></linearGradient>
        <linearGradient id="fade" gradientUnits="userSpaceOnUse" x1="0" y1="195" x2="0" y2="420"><stop offset="0" stopColor="#fff" stopOpacity=".15" /><stop offset=".3" stopColor="#fff" stopOpacity=".5" /><stop offset="1" stopColor="#fff" /></linearGradient>
        <mask id="m" maskUnits="userSpaceOnUse" x="0" y="100" width="1600" height="1100"><rect x="0" y="100" width="1600" height="1100" fill="url(#fade)" /></mask>
      </defs>
      <rect x="135" y="126" width="1428" height="97" fill="#3a3a3a" />
      <rect x="135" y="223" width="1428" height="801" fill="url(#floor)" />
      <rect x="135" y="1024" width="1428" height="98" fill="#2c2c2c" />
      <g mask="url(#m)">
        {gridLines().map((l) => (
          <line key={l.k} x1={l.p[0]} y1={l.p[1]} x2={l.p[2]} y2={l.p[3]} stroke="#fff" strokeOpacity={(l.major ? 0.17 : 0.075) * l.o} />
        ))}
      </g>
      <path d="M834 126V500" stroke="#3c9a66" strokeWidth="1.500" />
      <path d="M834 476V611" stroke="#33d97c" strokeWidth="1.500" />
      <path d="M834 611L1563 378" stroke="#2f66ae" strokeWidth="1.500" /><path d="M834 611l92-29" stroke="#2f83e4" strokeWidth="1.500" />
      <path d="M834 611L1563 851" stroke="#b04444" strokeWidth="1.500" /><path d="M834 611l104 35" stroke="#e04242" strokeWidth="1.500" />
      <g fill="none" stroke="#6cc6f6" strokeWidth="1.400">
        {PARTICLES.map(([x, y, r], i) => <circle key={i} cx={x} cy={y} r={r} />)}
        <ellipse cx="835" cy="611" rx="28.500" ry="9.500" />
        <ellipse cx="832" cy="611" rx="18" ry="28" /><ellipse cx="838" cy="611" rx="18" ry="28" />
      </g>
      <path d="M834 452l7 23q-7 3-13 0z" fill="#2ee67c" />
      <path d="M943 577l-16-2-3 2v6l4 3 4 0z" fill="#2e86ea" />
      <path d="M959 652l-17-12-5 0-2 6v5z" fill="#e44646" />
      <rect x="852" y="615" width="6" height="6" fill="#f79a34" />
      <g strokeWidth="1.400">
        <path d="M877 505l26-7v36" fill="none" stroke="#e04a4a" /><path d="M890 501l13-3v19z" fill="#e04a4a88" stroke="#e04a4a" />
        <path d="M878 527l31 9v39" fill="none" stroke="#2f83e4" /><path d="M894 531l15 5v18z" fill="#4a8cd488" stroke="#2f83e4" />
        <path d="M944 602l30 9-26 10" fill="none" stroke="#2ed873" /><path d="M959 606l15 5-14 5z" fill="#2ed87388" stroke="#2ed873" />
      </g>
      <path d="M178 1079V1061" stroke="#2ed873" strokeWidth="1.300" /><path d="M178 1079l13-5" stroke="#2f83e4" strokeWidth="1.300" /><path d="M178 1079l13 4" stroke="#e04242" strokeWidth="1.300" />
      <g fontSize="16" textAnchor="middle"><text x="177" y="1056" fill="#2ed873">Y</text><text x="201" y="1077" fill="#2f83e4">Z</text><text x="201" y="1093" fill="#e04242">X</text></g>
    </svg>
  );
}

function Timeline() {
  const at = (f: number) => `${((6 + f * 5.7464) / 1448) * 100}%`;
  const frames = Array.from({ length: 251 }, (_, i) => i);
  return (
    <svg className="h-[30px] min-w-0 flex-1" role="img" aria-label="时间线">
      <line x1="0" x2="100%" y1="25.500" y2="25.500" stroke="#a0a0a0" />
      {frames.map((f) => <line key={f} x1={at(f)} x2={at(f)} y1="26" y2={f % 10 === 0 ? 29 : 27} stroke="#b0b0b0" />)}
      {frames.filter((f) => f % 25 === 0).map((f) => <line key={f} x1={at(f)} x2={at(f)} y1="3" y2="25" stroke="#8c8c8c" />)}
      {frames.filter((f) => f % 10 === 0).map((f) => <text key={f} x={at(f)} y="17" textAnchor="middle" fontSize="16" fill="#b8b8b8">{f}</text>)}
      <svg x={at(13)} overflow="visible"><rect x="-4" y="2" width="8" height="23" fill="#86a3d0" /><text x="6" y="17" fontSize="16" fill="#7f9dcb">13</text></svg>
    </svg>
  );
}

const T: Record<string, ReactNode> = {
  start: <path d="M7 6h3v14H7zM20 6v14l-10-7z" fill="#1a1a1a" />,
  prevk: <><path d="M6 6h2v14H6z" fill="#ddd" /><path d="M9 6h2v14H9zM20 6v14l-9-7z" fill="#1a1a1a" /></>,
  prev: <path d="M15 6v14L6 13zM17 6h2v14h-2z" fill="#1a1a1a" />,
  play: <path d="M6 4l15 9-15 9z" fill="#1a1a1a" />,
  next: <path d="M7 6h2v14H7zM11 6v14l9-7z" fill="#1a1a1a" />,
  nextk: <><path d="M6 6v14l9-7zM15 6h2v14h-2z" fill="#1a1a1a" /><path d="M18 6h2v14h-2z" fill="#ddd" /></>,
  end: <path d="M6 6v14l10-7zM16 6h3v14h-3z" fill="#1a1a1a" />,
  rec: <><circle cx="13" cy="13" r="9.500" fill="#e25353" stroke="#222" /><path d="M8 18l10-10" stroke="#222" strokeWidth="3" /><circle cx="17" cy="9" r="3" fill="#222" /></>,
  auto: <><circle cx="13" cy="13" r="9.500" fill="#e25353" stroke="#222" /><path d="M11 8q-4 5 0 10M15 8q4 5 0 10" stroke="#222" strokeWidth="2" fill="none" /></>,
  gear: <><circle cx="13" cy="13" r="10" fill="#d68a34" stroke="#222" /><circle cx="13" cy="13" r="4" fill="none" stroke="#222" strokeWidth="3" /></>,
  p: <><circle cx="13" cy="13" r="10" fill="#86a3d0" stroke="#222" strokeWidth="3.500" /><circle cx="13" cy="13" r="10" fill="none" stroke={OR} strokeWidth="1.800" /><text x="13" y="19" textAnchor="middle" fontSize="16" fontWeight="700" fill="#1a1a1a">P</text></>,
  dots: <>{[0, 1, 2, 3, 4, 5, 6, 7, 8].map((i) => <circle key={i} cx={5 + (i % 3) * 8} cy={5 + Math.floor(i / 3) * 8} r="2.600" fill={i % 3 < 2 && i < 6 ? OR : "#1c1c1c"} />)}</>,
  film: <><rect x="6" y="2" width="14" height="22" fill="#c98634" stroke="#222" /><path d="M9.500 2v22M16.500 2v22M9 9h8M9 17h8" stroke="#222" strokeWidth="1.300" /><path d="M7.500 3v20M18.500 3v20" stroke="#222" strokeDasharray="2 2" /><path d="M26 20v6h-6z" fill="#111" /></>,
};

function TBtns({ items, on = false, cls = "" }: { items: string[]; on?: boolean; cls?: string }) {
  return (
    <div className={`flex gap-px overflow-hidden rounded-[2px] ${cls}`}>
      {items.map((n) => (
        <button key={n} aria-label={n} className={`flex h-[26px] w-[27px] items-center justify-center ${on && n !== "dots" ? "bg-[#86a3d0]" : "bg-[#595959]"}`}>
          {T[n] ? <svg viewBox="0 0 26 26" className="size-[26px]">{T[n]}</svg> : <Icon n={n} cls="size-[24px]" />}
        </button>
      ))}
    </div>
  );
}

const sideTab = "flex w-[30px] items-center justify-center [writing-mode:vertical-rl] [text-orientation:sideways]";
const row = "grid items-center";

export default function App() {
  return (
    <div className="flex h-screen min-h-[1100px] flex-col overflow-hidden bg-[#3c3c3c] font-['Noto_Sans','Noto_Sans_CJK_SC',sans-serif] text-[16px] leading-[20px] text-[#b8b8b8]">
      <header className="flex h-[23px] shrink-0 items-center bg-white pl-[3px] text-[12px] text-black">
        <svg viewBox="0 0 16 16" className="mr-[5px] size-[15px]"><circle cx="8" cy="8" r="7.500" fill="#1c2757" /><circle cx="9.500" cy="7" r="5" fill="#7f93cf" /><circle cx="10" cy="7" r="3" fill="#18214d" /></svg>
        <h1>Cinema 4D R21.207 (RC) - [未标题 1 *] - 主要</h1>
        <div className="ml-auto flex items-center gap-[35px] pr-[20px]">
          <button aria-label="最小化"><svg viewBox="0 0 10 10" className="size-[10px]"><path d="M0 5.500h10" stroke="#000" /></svg></button>
          <button aria-label="还原"><svg viewBox="0 0 10 10" className="size-[10px]"><path d="M.5 2.500h7v7h-7zM2.500 2.500v-2h7v7h-2" fill="none" stroke="#000" /></svg></button>
          <button aria-label="关闭"><svg viewBox="0 0 10 10" className="size-[10px]"><path d="M0 0l10 10M10 0L0 10" stroke="#000" /></svg></button>
        </div>
      </header>

      <div className="flex h-[34px] shrink-0 items-center pb-[7px] pl-[8px]">
        <Menu items={["*文件", "编辑", "*创建", "模式", "选择", "工具", "*网格", "样条", "*体积", "*运动图形", "角色", "动画", "模拟", "跟踪器", "渲染", "*扩展", "INSYDIUM", "Redshift", "*窗口", "*帮助", "RealFlow"]} />
        <div className="ml-auto flex items-center whitespace-nowrap">
          <span className="mr-[17px]">节点空间:</span>
          <Drop label="节点空间" options={["当前 (标准/物理)"]} cls="w-[150px]" />
          <span className="mr-[8px] ml-[40px]">界面:</span>
          <Drop label="界面" options={["启动 (用户)"]} cls="w-[171px]" />
          <button aria-label="搜索"><Search className="mx-[5px] size-[15px] text-[#999]" /></button>
        </div>
      </div>

      <main className="flex min-h-0 flex-1">
        <div className="flex min-w-0 flex-1 flex-col">
          <div className="flex h-[38px] shrink-0 items-start pt-px">
            <div className="mt-[3px] mr-[4px] ml-px h-[28px] w-[4px] bg-[radial-gradient(circle,#7a7a7a_1px,transparent_1px)] bg-[size:3px_4px]" />
            <HGroup items={b("undo", "redo")} cls="mr-[12px]" />
            <HGroup items={[{ n: "live" }, { n: "move", on: true }, { n: "scale" }, { n: "rotate" }]} cls="mr-[4px]" />
            <HGroup items={b("psr")} cls="mr-[4px]" />
            <HGroup items={b("moveC")} cls="mr-[12px]" />
            <HGroup items={[{ n: "x", on: true }, { n: "y", on: true }, { n: "z", on: true }, { n: "coord" }]} cls="mr-[12px]" />
            <HGroup items={b("clap1", "clap2", "clap3")} cls="mr-[12px]" />
            <HGroup items={[{ n: "cube" }, { n: "pen" }, { n: "subd" }, { n: "extrude", pale: true }, { n: "array", ring: true }, { n: "cubes", ring: true }, { n: "field" }, { n: "bend" }]} cls="mr-[4px]" />
            <HGroup items={b("floor", "camera", "bulb", "uv", "psr", "drop", "ring", "grid", "qr", "snake", "target", "sOrange", "burst")} />
          </div>

          <div className="flex min-h-0 flex-1">
            <div className="flex w-[39px] shrink-0 flex-col pt-[2px] pl-px">
              <GripH cls="mb-[3px] w-[34px]" />
              <VGroup items={b("editable")} cls="mb-[12px]" />
              <VGroup items={[{ n: "model", on: true }, { n: "texture" }]} cls="mb-[4px]" />
              <VGroup items={b("point", "edge", "poly")} cls="mb-[4px]" />
              <VGroup items={b("axisL")} cls="mb-[12px]" />
              <VGroup items={[{ n: "s1", on: true }, { n: "s2" }, { n: "s3" }]} cls="mb-[12px]" />
              <VGroup items={b("magnet")} cls="mb-[12px]" />
              <VGroup items={[{ n: "wp" }, { n: "wplock", on: true }, { n: "wprot" }]} />
            </div>
            <div className="flex w-[57px] shrink-0 flex-col gap-[4px] pt-[2px] pl-px">
              <GripH cls="-mb-px w-[50px]" />
              <VGroup wide items={b("tweak")} />
              <VGroup wide items={b("d1", "d2", "d3", "d4", "d5", "d6")} />
              <VGroup wide items={b("e1", "e2", "e3")} />
              <VGroup wide items={[{ n: "f1" }, { n: "f2", gear: true }, { n: "f3" }]} />
              <VGroup wide items={b("g1", "g2", "g3", "g4")} />
              <VGroup wide items={b("h1", "h2", "h3", "h4")} />
              <VGroup wide items={b("i1", "i2", "i3", "i4")} />
            </div>
            <div className="w-[38px] shrink-0 pt-[2px]">
              <GripH cls="mb-[3px] w-[34px]" />
              <VGroup items={b("move", "", "", "", "", "", "", "")} />
            </div>

            <section className="mt-px mb-[3px] flex min-w-0 flex-1 flex-col border-t border-l border-[#4d4d4d]">
              <div className="flex h-[29px] shrink-0 items-center pr-[3px] pb-[3px] pl-[6px]">
                <Burger cls="mr-[10px] text-[#909090]" />
                <Menu items={["查看", "摄像机", "显示", "*选项", "过滤", "面板", "Redshift", "ProRender"]} />
                <svg viewBox="0 0 76 16" className="ml-auto h-[16px] w-[76px] text-[#8d8d8d]" fill="none" stroke="currentColor" strokeWidth="1.500">
                  <path d="M8 1l-2.500 3h5zM8 15l-2.500-3h5zM1 8l3-2.500v5zM15 8l-3-2.500v5z" fill="currentColor" strokeWidth=".5" /><path d="M8 4v8M4 8h8" strokeDasharray="2 1" />
                  <path d="M28 2v12M25 5l3-4 3 4M24 10l4 5 4-5z" /><path d="M46 2a7 7 0 0 0-1 11M50 14a7 7 0 0 0 1-11M43 14h3v-3M53 2h-3v3" /><path d="M62 1h13v14H62zM62 7h7v8" />
                </svg>
              </div>
              <div className="relative min-h-0 flex-1 overflow-hidden border border-[#868686]">
                <Scene />
                <span className="absolute top-[4px] left-[2px] bg-[#333] px-[2px] leading-[22px] text-[#e0e0e0]">透视视图</span>
                <div className="absolute top-[10px] left-[283px] flex flex-col items-start leading-[29px] text-[#fcb900]">
                  <span className="bg-[#595959] px-[5px]">Number of emitters: 1</span>
                  <span className="bg-[#595959] px-[5px]">Total live particles: 30</span>
                </div>
                <span className="absolute top-[4px] left-1/2 -ml-[54px] flex items-center text-[#e0e0e0]">默认摄像机<svg viewBox="0 0 34 34" className="ml-[2px] size-[20px]">{camera}</svg></span>
                <span className="absolute right-[8px] bottom-[3px] bg-[#2f2f2f] px-[7px] leading-[22px] text-[#e0e0e0]">网格间距 : 10 cm</span>
              </div>
            </section>

            <div className="w-[42px] shrink-0 pt-[2px] pl-[4px]">
              <GripH cls="mb-[3px] w-[34px]" />
              <VGroup items={b("v1", "v2", "v3", "v4", "v5", "v6", "v7", "v8", "v9", "v10")} />
            </div>
          </div>

          <div className="flex h-[30px] shrink-0 items-start pr-[3px] pl-[48px]">
            <Timeline />
            <Field label="当前帧" value="13 F" cls="ml-[8px] mt-[2px] w-[99px]" />
          </div>

          <div className="flex h-[33px] shrink-0 items-center pr-[4px] pb-px pl-[48px]">
            <Field label="起始帧" value="0 F" />
            <div className="mr-[7px] ml-[7px] flex h-[18px] flex-1 items-center justify-between rounded-[2px] bg-[#5a5a5a] px-[5px] text-[#c4c4c4]">
              <span className="flex items-center gap-[7px]"><i className="h-[12px] w-[4px] border-x border-[#8a8a8a]" />0 F</span>
              <span className="flex items-center gap-[7px]">250 F<i className="h-[12px] w-[4px] border-x border-[#8a8a8a]" /></span>
            </div>
            <Field label="结束帧" value="250 F" />
            <TBtns items={["start"]} cls="ml-[11px]" />
            <TBtns items={["prevk", "prev", "play", "next", "nextk"]} cls="ml-[11px]" />
            <TBtns items={["end"]} cls="ml-[12px]" />
            <TBtns items={["rec", "auto"]} cls="ml-[11px]" />
            <TBtns items={["gear"]} cls="ml-[11px]" />
            <TBtns items={["move", "scale", "rotate", "p", "dots"]} on cls="ml-[3px]" />
            <TBtns items={["film"]} on cls="ml-[11px]" />
          </div>

          <div className="flex h-[184px] shrink-0 gap-[5px] pr-[2px] pl-[39px]">
            <section className="min-w-0 flex-1 border border-[#4f4f4f]">
              <div className="flex h-[30px] items-center border-b border-[#4f4f4f] pb-[3px] pl-[6px]">
                <Burger cls="mr-[10px] text-[#909090]" />
                <Menu items={["*创建", "*编辑", "查看", "选择", "材质", "纹理", "Cycles 4D"]} />
              </div>
            </section>
            <section className="w-[432px] border border-[#4f4f4f] pr-[4px] pl-[3px]">
              <div className="flex h-[24px] items-center border-b border-[#4f4f4f]">
                <Burger cls="mr-[8px] text-[#909090]" />
                <span className="w-[135px]">位置</span><span className="w-[135px]">尺寸</span><span>旋转</span>
              </div>
              <div className="mt-[6px] grid grid-cols-[14px_1fr_16px_1fr_18px_1fr] items-center gap-y-[4px]">
                {[["X", "0 cm", "X", "4 cm", "H", "0 °"], ["Y", "0 cm", "Y", "4 cm", "P", "0 °"], ["Z", "0 cm", "Z", "0 cm", "B", "0 °"]].map((r, i) =>
                  r.map((c, j) => (j % 2 ? <Field key={`${i}${j}`} label={`${r[j - 1]} ${j}`} value={c} cls="w-full" /> : <span key={`${i}${j}`} className={j ? "pl-[2px]" : ""}>{c}</span>)),
                )}
              </div>
              <div className="mt-[7px] grid grid-cols-[14px_1fr_16px_1fr_18px_1fr]">
                <E /><Drop label="坐标模式" options={["对象 (相对)"]} /><E /><Drop label="尺寸模式" options={["绝对尺寸"]} /><E />
                <button className="rounded-[3px] border border-[#4a4a4a] bg-[#595959] text-[#c0c0c0]">应用</button>
              </div>
            </section>
          </div>

          <footer className="mt-[4px] mr-[2px] flex h-[25px] shrink-0 items-center border border-[#4f4f4f] pl-[4px]"><Burger cls="text-[#909090]" /></footer>
        </div>

        <aside className="flex w-[955px] shrink-0 flex-col">
          <div className="flex h-[308px] shrink-0">
            <section className="flex min-w-0 flex-1 flex-col border border-[#4f4f4f]">
              <div className="flex h-[29px] shrink-0 items-center border-b border-[#4f4f4f] pr-[2px] pb-[2px] pl-[6px]">
                <Burger cls="mr-[10px] text-[#909090]" />
                <Menu items={["文件", "编辑", "*查看", "对象", "*标签", "书签"]} />
                <div className="ml-auto flex gap-[4px] text-[#8d8d8d]"><Search className="size-[16px]" /><ArrowBigUp className="size-[18px]" /><Filter className="size-[16px]" /><SquarePlus className="size-[16px]" /></div>
              </div>
              <div className="mt-[2px] flex h-[24px] shrink-0 items-center bg-[#484848]">
                <div className="flex h-full w-[116px] items-center pb-px pl-[8px] text-[#fcb92c]">
                  <i className="mb-[12px] h-[12px] w-[8px] border-b border-l border-[#808080]" /><Logo cls="size-[18px]" /><span className="ml-px">xpEmitter</span>
                </div>
                <div className="flex h-full w-[40px] items-center border-r border-[#525252] pl-[3px]">
                  <svg viewBox="0 0 36 16" className="h-[16px] w-[36px]"><rect x="0" y="2" width="12" height="12" rx="2" fill="#7f7f7f" /><path d="M3 11l6-6" stroke="#444" strokeWidth="1.500" /><circle cx="19" cy="4.500" r="2.300" fill="#909090" /><circle cx="19" cy="12" r="2.300" fill="#909090" /><path d="M24 8l3.500 4 6-8" fill="none" stroke="#3fd17f" strokeWidth="2" /></svg>
                </div>
              </div>
              <div className="flex min-h-0 flex-1"><div className="w-[115px] border-r border-[#4c4c4c]" /><div className="w-[41px] border-r border-[#4c4c4c]" /></div>
            </section>
            <div className="flex w-[30px] flex-col bg-[#313131] text-[#8a8a8a]" role="tablist">
              <button role="tab" className={`${sideTab} h-[43px] bg-[#3c3c3c] text-[#c0c0c0]`}>对象</button>
              <button role="tab" className={`${sideTab} h-[46px]`}>场次</button>
              <button role="tab" className={`${sideTab} h-[91px]`}>内容浏览器</button>
            </div>
          </div>

          <div className="mt-[4px] mb-[2px] flex min-h-0 flex-1">
            <section className="flex min-w-0 flex-1 flex-col border border-[#4f4f4f]">
              <div className="flex h-[30px] shrink-0 items-center border-b border-[#4f4f4f] pr-[2px] pb-[2px] pl-[6px]">
                <Burger cls="mr-[10px] text-[#d8d8d8]" />
                <Menu items={["模式", "编辑", "用户数据"]} />
                <div className="ml-auto flex gap-[4px] text-[#8d8d8d]"><ArrowLeft className="size-[16px] text-[#b0b0b0]" /><ArrowRight className="size-[16px] text-[#5a5a5a]" /><ArrowUp className="size-[16px]" /><Search className="size-[16px]" /><Lock className="size-[16px]" /><CircleDot className="size-[16px]" /><SquarePlus className="size-[16px]" /></div>
              </div>

              <div className="flex h-[27px] shrink-0 items-center pl-[3px]"><Logo /><h2 className="ml-[5px]">X-Particles Emitter Object [xpEmitter]</h2></div>
              <div className="ml-[3px] grid w-[839px] shrink-0 grid-cols-7 gap-px" role="tablist">
                {["基本", "坐标", "对象", "Emission", "Extended Data", "Groups", "Display", "Questions", "Modifiers", "Editing", "Advanced"].map((t, i) => {
                  const on = i === 2 || i === 3;
                  return <button key={t} role="tab" aria-selected={on} className={`h-[25px] whitespace-nowrap ${on ? "bg-[#86a3d0] text-black" : "bg-[#595959] text-[#b8b8b8]"}`}>{t}</button>;
                })}
              </div>

              <div className="flex min-h-0 flex-1">
                <div className="flex min-w-0 flex-1 flex-col pl-[3px]">
                  <h3 className="mt-[9px] ml-px h-[20px] font-bold text-[#e6e6e6]">对象属性</h3>
                  <SubTabs items={["Emitter", "Initial State"]} cls="mt-[7px] ml-px h-[23px] w-[187px]" />
                  <Hr cls="mt-[6px]" />
                  <div className={`${row} mt-[2px] auto-rows-[28px] grid-cols-[136px_1fr_82px_1fr]`}>
                    <Lab t="Emitter Shape" lead={false} /><Drop label="Emitter Shape" options={["Sphere"]} cls="mr-px" /><E /><E />
                    <Lab t="Offset Origin" lead={false} /><Num label="Offset Origin" value="0 cm" at={50} tick={false} /><Lab t="Radius" lead={false} /><Num label="Radius" value="2 cm" at={0} />
                    <Lab t="Surface Only" id="surface" lead={false} /><Check id="surface" /><E /><E />
                    <Lab t="Direction" /><Drop label="Direction" options={["Normal"]} cls="mr-px" /><E /><E />
                    <Lab t="Retiming" /><div className="col-span-3"><Num label="Retiming" value="100 %" at={10} /></div>
                  </div>
                  <Hr cls="mt-[2px]" />
                  <div className="mt-[5px] flex gap-[3px]">
                    <button aria-label="帮助" className="ml-px"><svg viewBox="0 0 30 30" className="size-[30px]"><circle cx="15" cy="15" r="13.500" fill="none" stroke="#dcdcdc" strokeWidth="1.700" /><path d="M9 11.500v-3h11v7h-6v3M14 20.500v3.500" fill="none" stroke="#dcdcdc" strokeWidth="3" /></svg></button>
                    <button aria-label="重置"><svg viewBox="0 0 30 30" className="size-[30px]"><circle cx="15" cy="15" r="13.500" fill="none" stroke="#dcdcdc" strokeWidth="1.700" /><path d="M8 19a8.500 8.500 0 1 1 11 4" fill="none" stroke="#dcdcdc" strokeWidth="1.700" /><path d="M19 18l-5 5 7 3z" fill="#dcdcdc" /></svg></button>
                  </div>
                  <h3 className="mt-[7px] ml-px h-[20px] font-bold text-[#e6e6e6]">Emission</h3>
                  <SubTabs items={["Emission", "Motion Inheritance", "Thinking Particles"]} cls="mt-[7px] ml-px h-[25px] w-[464px]" />
                  <Hr cls="mt-[4px]" />
                  <div className={`${row} h-[33px] grid-cols-[436px_1fr]`}>
                    <LabCheck t="Subframe Emit" on /><LabCheck t="No Control System" />
                  </div>
                  <Hr />
                  <div className={`${row} mt-[3px] grid-cols-[147px_1fr_110px_1fr] grid-rows-[27px_27px_29px_29px_28px_28px_28px_29px_28px_29px]`}>
                    <Lab t="Emission" /><Drop label="Emission" options={["Shot"]} cls="mr-px" /><Lab t="Mode" /><Drop label="Mode" options={["Simulate (Legacy)"]} />
                    <Lab t="Shot Type" /><Drop label="Shot Type" options={["Random"]} cls="mr-px" /><E /><E />
                    <Lab t="Shot Time" /><Num label="Shot Time" value="1 F" /><Lab t="Duration" /><Num label="Duration" value="1 F" />
                    <Lab t="Shot Count" /><Num label="Shot Count" value="30" at={3} /><Lab t="Per-Frame" id="pf" lead={false} /><Check id="pf" on />
                    <Lab t="Emit all Frames" id="ef" off lead={false} /><Check id="ef" on off /><E /><E />
                    <Lab t="Start Emit" off /><Num label="Start Emit" value="0 F" off /><Lab t="End Emit" off /><Num label="End Emit" value="75 F" off />
                    <Lab t="Full Lifespan" id="fl" /><Check id="fl" on /><E /><E />
                    <Lab t="Lifespan" off /><Num label="Lifespan" value="75 F" off /><Lab t="Variation" off lead={false} /><Num label="Lifespan Variation" value="0 F" off />
                    <Lab t="Birthrate" off arrow /><Num label="Birthrate" value="1000" at={100} off /><Lab t="Variation" off lead={false} /><Num label="Birthrate Variation" value="0" at={0} off />
                    <Lab t="No Intersection" id="ni" lead={false} /><Check id="ni" /><Lab t="Radius" off /><Num label="Intersection Radius" value="10 cm" at={10} off />
                  </div>
                  <h3 className="mt-[9px] ml-px h-[20px] font-bold text-[#e6e6e6]">Basic Particle Data</h3>
                  <div className={`${row} mt-[2px] auto-rows-[29px] grid-cols-[102px_1fr_166px_1fr]`}>
                    <Lab t="Speed" /><Num label="Speed" value="25 cm" at={2} /><Lab t="Variation" /><Num label="Speed Variation" value="0 cm" at={0} />
                    <Lab t="Radius" /><Num label="Particle Radius" value="1 cm" at={5} /><Lab t="Variation" /><Num label="Radius Variation" value="0 cm" at={0} />
                    <Lab t="Scale" /><div className="flex gap-[5px]">{["X", "Y", "Z"].map((a) => <Field key={a} label={`Scale ${a}`} value="1" />)}</div><Lab t="Uniform Scale" id="us" /><Check id="us" on />
                    <Lab t="Scale Var." lead={false} /><div className="flex gap-[5px]">{["X", "Y", "Z"].map((a) => <Field key={a} label={`Scale Var ${a}`} value="0" />)}</div><Lab t="Uniform Variation" id="uv" lead={false} /><Check id="uv" on />
                  </div>
                  <h3 className="mt-[8px] ml-px h-[20px] font-bold text-[#e6e6e6]">Particle Death</h3>
                  <div className="mt-[4px] flex min-h-0 flex-1 items-start pl-[23px]">
                    <span className="w-[70px] shrink-0 pt-px">Actions ›</span>
                    <div className="h-full flex-1 border border-b-0 border-[#4f4f4f]" />
                    <button aria-label="拾取" className="mx-[2px]"><svg viewBox="0 0 18 18" className="size-[18px]"><circle cx="9" cy="9" r="8" fill="none" stroke="#aaa" /><path d="M5 5l8 3.500-3.500 1L8 13z" fill="#bbb" /></svg></button>
                  </div>
                </div>
                <div className="flex w-[17px] flex-col items-center pt-[6px] pb-[4px]">
                  <svg viewBox="0 0 8 5" className="h-[5px] w-[8px]"><path d="M1 4l3-3 3 3" fill="none" stroke="#a0a0a0" /></svg>
                  <div className="mt-[4px] w-[4px] flex-[9] rounded bg-[#5c5c5c]" />
                  <div className="flex-1" />
                  <svg viewBox="0 0 8 5" className="h-[5px] w-[8px]"><path d="M1 1l3 3 3-3" fill="none" stroke="#a0a0a0" /></svg>
                </div>
              </div>
            </section>
            <div className="flex w-[30px] flex-col bg-[#313131] text-[#8a8a8a]" role="tablist">
              <button role="tab" className={`${sideTab} h-[43px] bg-[#3c3c3c] text-[#c0c0c0]`}>属性</button>
              <button role="tab" className={`${sideTab} h-[30px]`}>层</button>
              <button role="tab" className={`${sideTab} h-[42px]`}>构造</button>
            </div>
          </div>
        </aside>
      </main>

      <svg viewBox="0 0 2560 1400" className="pointer-events-none fixed inset-0 h-full w-full" aria-hidden="true">
        <g fill="none" stroke="#f01a22" strokeWidth="3">
          <path d="M1603 538H2325V628H1603zM1605 833H2270V939H1605zM1603 1136H1892V1195H1603z" />
          <path strokeWidth="4" d="M1422 518L1512 549M1445 791L1530 840M1470 1094L1542 1126" />
        </g>
        <path fill="#f01a22" d="M1525 553l-25 0 7-17zM1544 847l-25-4 9-16zM1557 1133l-25-1 9-16z" />
        <circle cx="2470" cy="1098" r="23.500" fill="#fff" stroke="#2b86ee" strokeWidth="3" /><circle cx="2470" cy="1098" r="20.500" fill="none" stroke="#2b2b2b" strokeWidth="1.200" />
        <path d="M2466 1095h8q0 6-4 10q-4-4-4-10z" fill="#111" stroke="#111" />
        <path d="M2467 1095q-8-1-8-9M2461 1091l-3-3M2464 1093l1-6M2473 1095q8-1 8-9M2479 1091l3-3M2476 1093l-1-6" fill="none" stroke="#111" strokeWidth="1.500" />
        <text x="2470" y="1114" textAnchor="middle" fontSize="6" fontWeight="700" fill="#111">野鹿客</text>
      </svg>
    </div>
  );
}
